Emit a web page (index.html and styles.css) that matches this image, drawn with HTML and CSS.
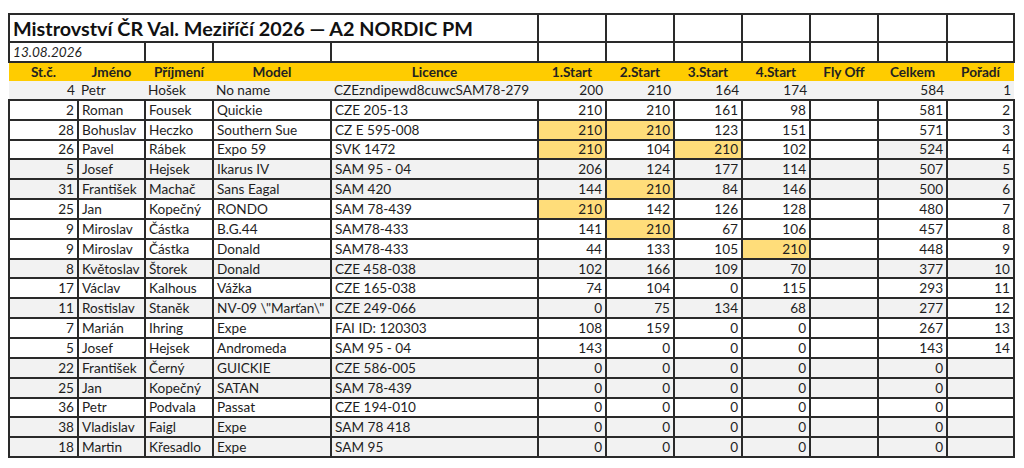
FILE: index.html
```html
<!DOCTYPE html>
<html lang="cs">
<head>
<meta charset="utf-8">
<title>Mistrovství ČR Val. Meziříčí 2026 — A2 NORDIC PM</title>
<link rel="stylesheet" href="styles.css">
</head>
<body>
<table class="sheet">
  <colgroup>
    <col class="c-st"><col class="c-jm"><col class="c-pr"><col class="c-mo"><col class="c-li">
    <col class="c-n"><col class="c-n"><col class="c-n"><col class="c-n"><col class="c-n">
    <col class="c-ce"><col class="c-po">
  </colgroup>
  <tbody>
    <tr class="title-row">
      <td colspan="5" class="title">Mistrovství ČR Val. Meziříčí 2026 — A2 NORDIC PM</td>
      <td></td><td></td><td></td><td></td><td></td><td></td><td></td>
    </tr>
    <tr class="date-row">
      <td colspan="2" class="date">13.08.2026</td>
      <td></td><td></td><td></td><td></td><td></td><td></td><td></td><td></td><td></td><td></td>
    </tr>
    <tr class="head">
      <th>St.č.</th><th>Jméno</th><th>Příjmení</th><th>Model</th><th>Licence</th>
      <th>1.Start</th><th>2.Start</th><th>3.Start</th><th>4.Start</th><th>Fly Off</th><th>Celkem</th><th>Pořadí</th>
    </tr>
    <tr class="first grey">
      <td class="num">4</td><td>Petr</td><td>Hošek</td><td>No name</td><td>CZEzndipewd8cuwcSAM78-279</td>
      <td class="num">200</td><td class="num">210</td><td class="num">164</td><td class="num">174</td><td></td><td class="num">584</td><td class="num">1</td>
    </tr>
    <tr>
      <td class="num">2</td><td>Roman</td><td>Fousek</td><td>Quickie</td><td>CZE 205-13</td>
      <td class="num">210</td><td class="num">210</td><td class="num">161</td><td class="num">98</td><td></td><td class="num">581</td><td class="num">2</td>
    </tr>
    <tr>
      <td class="num">28</td><td>Bohuslav</td><td>Heczko</td><td>Southern Sue</td><td>CZ E 595-008</td>
      <td class="num hi">210</td><td class="num hi">210</td><td class="num">123</td><td class="num">151</td><td></td><td class="num">571</td><td class="num">3</td>
    </tr>
    <tr>
      <td class="num">26</td><td>Pavel</td><td>Rábek</td><td>Expo 59</td><td>SVK 1472</td>
      <td class="num hi">210</td><td class="num">104</td><td class="num hi">210</td><td class="num">102</td><td></td><td class="num gc">524</td><td class="num">4</td>
    </tr>
    <tr class="grey">
      <td class="num">5</td><td>Josef</td><td>Hejsek</td><td>Ikarus IV</td><td>SAM 95 - 04</td>
      <td class="num">206</td><td class="num">124</td><td class="num">177</td><td class="num">114</td><td></td><td class="num">507</td><td class="num">5</td>
    </tr>
    <tr class="grey">
      <td class="num">31</td><td>František</td><td>Machač</td><td>Sans Eagal</td><td>SAM 420</td>
      <td class="num">144</td><td class="num hi">210</td><td class="num">84</td><td class="num">146</td><td></td><td class="num">500</td><td class="num">6</td>
    </tr>
    <tr>
      <td class="num">25</td><td>Jan</td><td>Kopečný</td><td>RONDO</td><td>SAM 78-439</td>
      <td class="num hi">210</td><td class="num">142</td><td class="num">126</td><td class="num">128</td><td></td><td class="num">480</td><td class="num">7</td>
    </tr>
    <tr>
      <td class="num">9</td><td>Miroslav</td><td>Částka</td><td>B.G.44</td><td>SAM78-433</td>
      <td class="num">141</td><td class="num hi">210</td><td class="num">67</td><td class="num">106</td><td></td><td class="num">457</td><td class="num">8</td>
    </tr>
    <tr>
      <td class="num">9</td><td>Miroslav</td><td>Částka</td><td>Donald</td><td>SAM78-433</td>
      <td class="num">44</td><td class="num">133</td><td class="num">105</td><td class="num hi">210</td><td></td><td class="num">448</td><td class="num">9</td>
    </tr>
    <tr class="grey">
      <td class="num">8</td><td>Květoslav</td><td>Štorek</td><td>Donald</td><td>CZE 458-038</td>
      <td class="num">102</td><td class="num">166</td><td class="num">109</td><td class="num">70</td><td></td><td class="num">377</td><td class="num">10</td>
    </tr>
    <tr>
      <td class="num">17</td><td>Václav</td><td>Kalhous</td><td>Vážka</td><td>CZE 165-038</td>
      <td class="num">74</td><td class="num">104</td><td class="num">0</td><td class="num">115</td><td></td><td class="num">293</td><td class="num">11</td>
    </tr>
    <tr class="grey">
      <td class="num">11</td><td>Rostislav</td><td>Staněk</td><td>NV-09 \"Marťan\"</td><td>CZE 249-066</td>
      <td class="num">0</td><td class="num">75</td><td class="num">134</td><td class="num">68</td><td></td><td class="num">277</td><td class="num wc">12</td>
    </tr>
    <tr>
      <td class="num">7</td><td>Marián</td><td>Ihring</td><td>Expe</td><td>FAI ID: 120303</td>
      <td class="num">108</td><td class="num">159</td><td class="num">0</td><td class="num">0</td><td></td><td class="num">267</td><td class="num">13</td>
    </tr>
    <tr>
      <td class="num">5</td><td>Josef</td><td>Hejsek</td><td>Andromeda</td><td>SAM 95 - 04</td>
      <td class="num">143</td><td class="num">0</td><td class="num">0</td><td class="num">0</td><td></td><td class="num">143</td><td class="num">14</td>
    </tr>
    <tr class="grey">
      <td class="num">22</td><td>František</td><td>Černý</td><td>GUICKIE</td><td>CZE 586-005</td>
      <td class="num">0</td><td class="num">0</td><td class="num">0</td><td class="num">0</td><td></td><td class="num">0</td><td></td>
    </tr>
    <tr class="grey">
      <td class="num">25</td><td>Jan</td><td>Kopečný</td><td>SATAN</td><td>SAM 78-439</td>
      <td class="num">0</td><td class="num">0</td><td class="num">0</td><td class="num">0</td><td></td><td class="num">0</td><td></td>
    </tr>
    <tr>
      <td class="num">36</td><td>Petr</td><td>Podvala</td><td>Passat</td><td>CZE 194-010</td>
      <td class="num">0</td><td class="num">0</td><td class="num">0</td><td class="num">0</td><td></td><td class="num">0</td><td></td>
    </tr>
    <tr class="grey">
      <td class="num">38</td><td>Vladislav</td><td>Faigl</td><td>Expe</td><td>SAM 78 418</td>
      <td class="num">0</td><td class="num">0</td><td class="num">0</td><td class="num">0</td><td></td><td class="num">0</td><td></td>
    </tr>
    <tr class="grey">
      <td class="num">18</td><td>Martin</td><td>Křesadlo</td><td>Expe</td><td>SAM 95</td>
      <td class="num">0</td><td class="num">0</td><td class="num">0</td><td class="num">0</td><td></td><td class="num">0</td><td></td>
    </tr>
  </tbody>
</table>
</body>
</html>
```
FILE: styles.css
```css
html, body {
  background: #ffffff;
}
body {
  margin: 13px 0 0 8px;
  font-family: Lato, "Open Sans", "Liberation Sans", sans-serif;
  color: #1e1e1e;
}
.sheet {
  border-collapse: collapse;
  table-layout: fixed;
  width: 1006px;
  font-size: 13.6px;
}
.c-st { width: 69px; }
.c-jm { width: 67px; }
.c-pr { width: 68px; }
.c-mo { width: 118px; }
.c-li { width: 207px; }
.c-n  { width: 68px; }
.c-ce { width: 69px; }
.c-po { width: 67px; }

.sheet td {
  border: 2px solid #2a2a2a;
  padding: 0 3px;
  height: 17.85px;
  line-height: 16px;
  white-space: nowrap;
  overflow: hidden;
  text-align: left;
}
.sheet td.num {
  text-align: right;
}
.title-row td {
  height: 26px;
}
.sheet td.title {
  font-weight: 700;
  font-size: 19.8px;
  line-height: 24px;
  padding-left: 3px;
  color: #111;
}
.date-row td {
  height: 18px;
}
.sheet td.date {
  font-style: italic;
  font-size: 13.6px;
}
.head th {
  background: #ffcc00;
  font-weight: 700;
  font-size: 13.6px;
  height: 18px;
  padding: 0 2px;
  text-align: center;
  border: 0;
  border-top: 2px solid #2a2a2a;
  color: #222;
}
.first td {
  border: 0;
  background: #f2f2f2;
}
.grey td {
  background: #f2f2f2;
}
.sheet td.hi {
  background: #ffdd7a;
}
.sheet td.gc {
  background: #f2f2f2;
}
.sheet td.wc {
  background: #ffffff;
}
```
